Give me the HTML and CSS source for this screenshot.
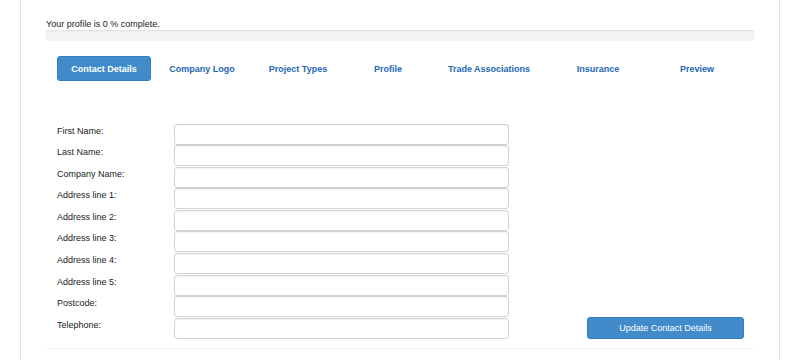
FILE: index.html
```html
<!DOCTYPE html>
<html>
<head>
<meta charset="utf-8">
<link rel="stylesheet" href="styles.css">
</head>
<body>
<div class="page">
  <p class="status">Your profile is 0 % complete.</p>
  <div class="progress"></div>
  <nav class="tabs">
    <a class="tab active">Contact Details</a>
    <a class="tab">Company Logo</a>
    <a class="tab">Project Types</a>
    <a class="tab">Profile</a>
    <a class="tab">Trade Associations</a>
    <a class="tab">Insurance</a>
    <a class="tab">Preview</a>
  </nav>
  <form class="form">
    <div class="fields">
      <div class="row"><label>First Name:</label><input type="text"></div>
      <div class="row"><label>Last Name:</label><input type="text"></div>
      <div class="row"><label>Company Name:</label><input type="text"></div>
      <div class="row"><label>Address line 1:</label><input type="text"></div>
      <div class="row"><label>Address line 2:</label><input type="text"></div>
      <div class="row"><label>Address line 3:</label><input type="text"></div>
      <div class="row"><label>Address line 4:</label><input type="text"></div>
      <div class="row"><label>Address line 5:</label><input type="text"></div>
      <div class="row"><label>Postcode:</label><input type="text"></div>
      <div class="row"><label>Telephone:</label><input type="text"></div>
    </div>
    <div class="actions">
      <button type="button" class="btn">Update Contact Details</button>
    </div>
  </form>
  <div class="footer"></div>
</div>
</body>
</html>
```
FILE: styles.css
```css
html, body {
  margin: 0;
  padding: 0;
  background: #fff;
}
body {
  font-family: "Liberation Sans", Arial, sans-serif;
  font-size: 9px;
  color: #222;
}
.page {
  margin: 0 20px;
  height: 360px;
  box-sizing: border-box;
  border-left: 1px solid #e2e2e2;
  border-right: 1px solid #e2e2e2;
  padding: 18px 25px 0 25px;
}
.status {
  margin: 0;
  line-height: 12px;
  color: #1a1a1a;
}
.progress {
  height: 11px;
  background: #f5f5f5;
  border-radius: 3px;
  box-shadow: inset 0 1px 2px rgba(0,0,0,0.1);
}
.tabs {
  display: grid;
  grid-template-columns: 94px 102px 90px 90px 112px 106px 92px;
  margin: 15px 0 0 11px;
  height: 25px;
}
.tab {
  display: flex;
  align-items: center;
  justify-content: center;
  font-weight: bold;
  color: #2566b5;
  border-radius: 3px;
  white-space: nowrap;
}
.tab.active {
  background: #428bca;
  color: #fff;
  border: 1px solid #3a7cbd;
  box-sizing: border-box;
}
.form {
  display: flex;
  margin: 42.5px 0 0 11px;
}
.fields {
  display: flex;
  flex-direction: column;
  gap: 0.6px;
}
.row {
  display: flex;
  height: 21px;
}
.row label {
  width: 117px;
  line-height: 12px;
  padding-top: 1px;
  color: #222;
}
.row input {
  width: 335px;
  height: 21px;
  box-sizing: border-box;
  margin: 0;
  border: 1px solid #d2d2d2;
  border-radius: 3px;
  background: #fff;
  box-shadow: inset 0 1px 1px rgba(0,0,0,0.04);
  padding: 0 4px;
  font: inherit;
}
.actions {
  display: flex;
  align-items: flex-end;
  margin-left: 78px;
}
.btn {
  width: 157px;
  height: 22px;
  margin: 0;
  background: #428bca;
  border: 1px solid #357ebd;
  border-radius: 3px;
  color: #fff;
  font: inherit;
  font-size: 9px;
  padding: 0;
}
.footer {
  margin-top: 9px;
  border-top: 1px solid #f2f2f2;
}
```
